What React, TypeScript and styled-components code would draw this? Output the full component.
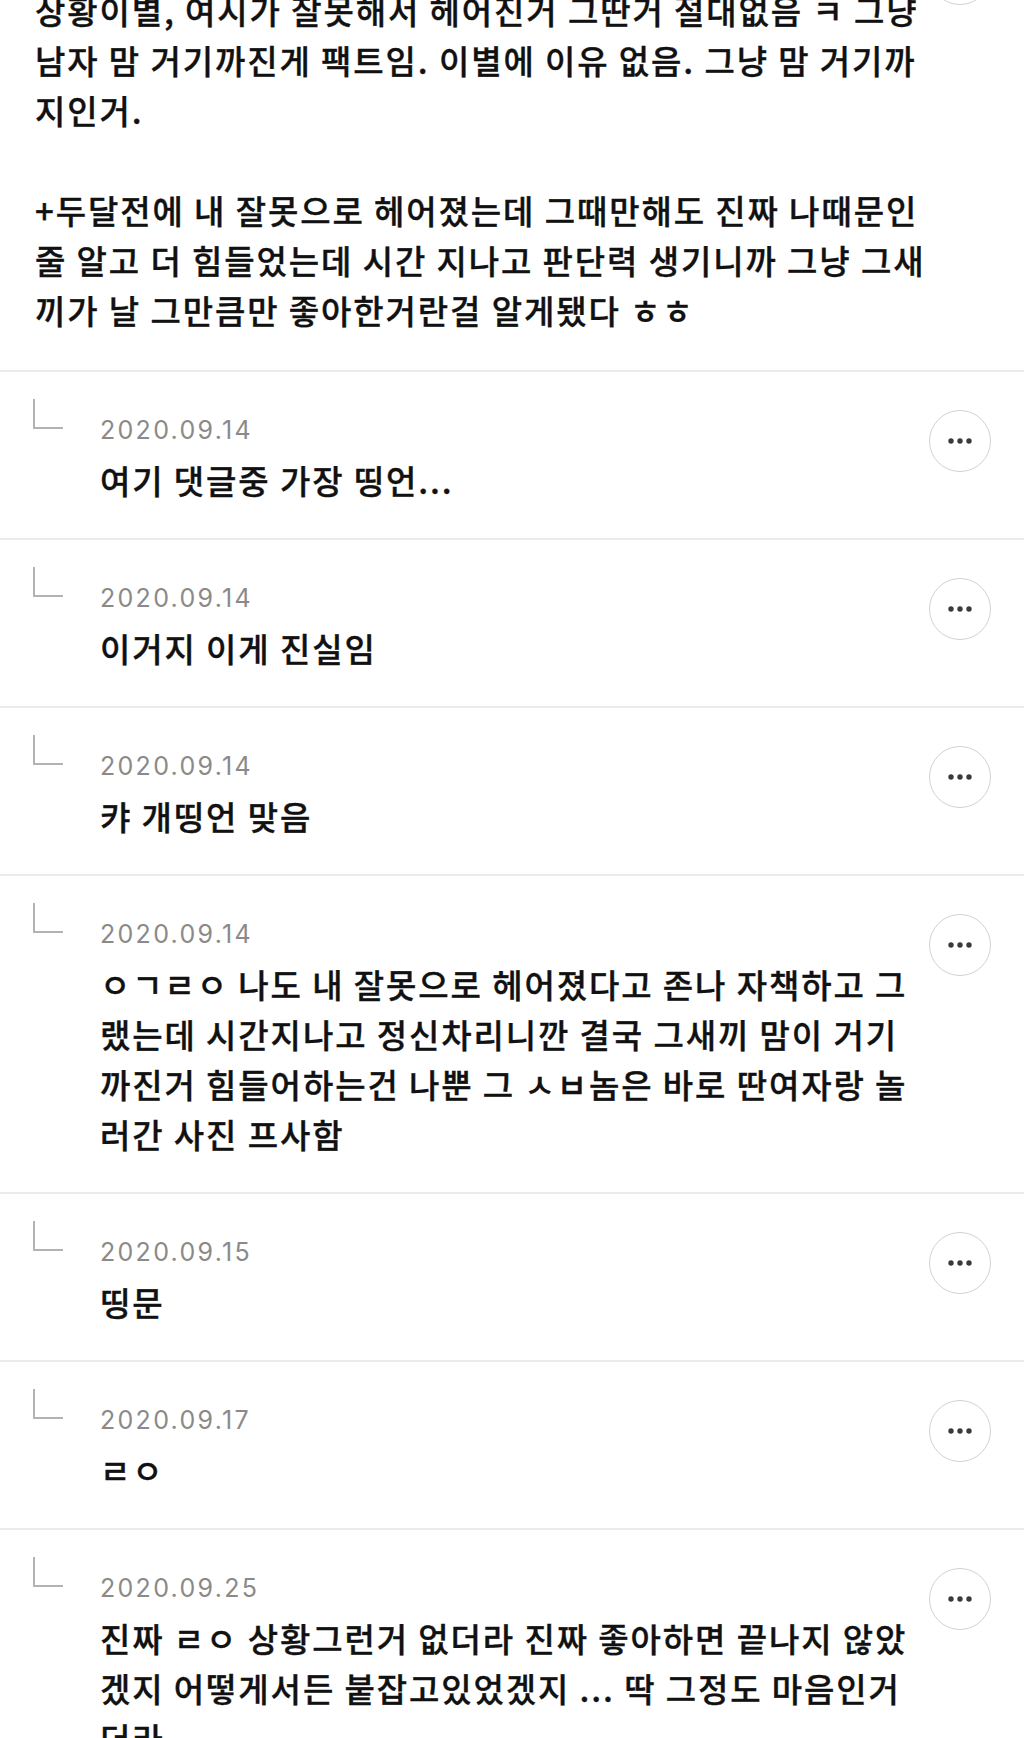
import React from "react";
import styled, { createGlobalStyle } from "styled-components";

const GlobalStyle = createGlobalStyle`
  html, body {
    margin: 0;
    padding: 0;
    background: #ffffff;
  }
  body {
    font-family: "Noto Sans CJK KR", "Noto Sans", sans-serif;
    color: #111111;
    overflow: hidden;
  }
`;

const Page = styled.div`
  width: 1024px;
  display: flow-root;
  background: #ffffff;
`;

const Thread = styled.div`
  margin-top: -57px;
  display: flex;
  flex-direction: column;
`;

const MainComment = styled.section`
  display: grid;
  grid-template-columns: minmax(0, 1fr) 62px;
  column-gap: 19px;
  padding: 0 33px 35px 35px;
  border-bottom: 2px solid #ebebeb;
`;

const MainBody = styled.div`
  padding-top: 42px;
`;

const Text = styled.p`
  margin: 0;
  font-family: "Noto Sans CJK KR", "Noto Sans", sans-serif;
  font-size: 33px;
  font-weight: 500;
  line-height: 50px;
  letter-spacing: 1.9px;
  color: #111111;
  -webkit-text-stroke: 0.35px #111111;
  white-space: nowrap;
`;

const Reply = styled.article`
  display: grid;
  grid-template-columns: 30px minmax(0, 1fr) 62px;
  column-gap: 37px;
  align-items: start;
  padding: 27px 33px 33px 33px;
  border-bottom: 2px solid #ebebeb;
`;

const ReplyBody = styled.div`
  margin-top: 14px;
  display: flex;
  flex-direction: column;
  gap: 8px;
  margin-right: -18px;
`;

const DateLine = styled.div`
  font-family: Inter, "Noto Sans", sans-serif;
  font-size: 25px;
  line-height: 34px;
  letter-spacing: 2.3px;
  color: #8a8a8a;
`;

const MoreButton = styled.button<{ $offset: number }>`
  width: 62px;
  height: 62px;
  margin-top: ${(p) => p.$offset}px;
  border-radius: 50%;
  border: 1.5px solid #d2d2d2;
  background: #ffffff;
  padding: 0;
  display: flex;
  align-items: center;
  justify-content: center;
  cursor: pointer;
`;

const ReplyMark = () => (
  <svg width="30" height="30" viewBox="0 0 30 30" aria-hidden="true">
    <path d="M1 0 V29 H30" fill="none" stroke="#b3b3b3" strokeWidth="2" />
  </svg>
);

const Dots = () => (
  <svg width="24" height="6" viewBox="0 0 24 6" aria-hidden="true">
    <circle cx="3" cy="3" r="2.7" fill="#3a3a3a" />
    <circle cx="12" cy="3" r="2.7" fill="#3a3a3a" />
    <circle cx="21" cy="3" r="2.7" fill="#3a3a3a" />
  </svg>
);

const Lines = ({ lines }: { lines: string[] }) => (
  <Text>
    {lines.map((l, i) => (
      <React.Fragment key={i}>
        {l === "" ? "\u00a0" : l}
        {i < lines.length - 1 && <br />}
      </React.Fragment>
    ))}
  </Text>
);

const mainLines = [
  "상황이별, 여시가 잘못해서 헤어진거 그딴거 절대없음 ㅋ 그냥",
  "남자 맘 거기까진게 팩트임. 이별에 이유 없음. 그냥 맘 거기까",
  "지인거.",
  "",
  "+두달전에 내 잘못으로 헤어졌는데 그때만해도 진짜 나때문인",
  "줄 알고 더 힘들었는데 시간 지나고 판단력 생기니까 그냥 그새",
  "끼가 날 그만큼만 좋아한거란걸 알게됐다 ㅎㅎ",
];

const replies: { date: string; lines: string[] }[] = [
  { date: "2020.09.14", lines: ["여기 댓글중 가장 띵언..."] },
  { date: "2020.09.14", lines: ["이거지 이게 진실임"] },
  { date: "2020.09.14", lines: ["캬 개띵언 맞음"] },
  {
    date: "2020.09.14",
    lines: [
      "ㅇㄱㄹㅇ 나도 내 잘못으로 헤어졌다고 존나 자책하고 그",
      "랬는데 시간지나고 정신차리니깐 결국 그새끼 맘이 거기",
      "까진거 힘들어하는건 나뿐 그 ㅅㅂ놈은 바로 딴여자랑 놀",
      "러간 사진 프사함",
    ],
  },
  { date: "2020.09.15", lines: ["띵문"] },
  { date: "2020.09.17", lines: ["ㄹㅇ"] },
  {
    date: "2020.09.25",
    lines: [
      "진짜 ㄹㅇ 상황그런거 없더라 진짜 좋아하면 끝나지 않았",
      "겠지 어떻게서든 붙잡고있었겠지 ... 딱 그정도 마음인거",
      "더라",
    ],
  },
];

export default function App() {
  return (
    <Page>
      <GlobalStyle />
      <Thread>
        <MainComment>
          <MainBody>
            <Lines lines={mainLines} />
          </MainBody>
          <MoreButton $offset={0} aria-label="더보기">
            <Dots />
          </MoreButton>
        </MainComment>
        {replies.map((r, i) => (
          <Reply key={i}>
            <ReplyMark />
            <ReplyBody>
              <DateLine>{r.date}</DateLine>
              <Lines lines={r.lines} />
            </ReplyBody>
            <MoreButton $offset={11} aria-label="더보기">
              <Dots />
            </MoreButton>
          </Reply>
        ))}
      </Thread>
    </Page>
  );
}
